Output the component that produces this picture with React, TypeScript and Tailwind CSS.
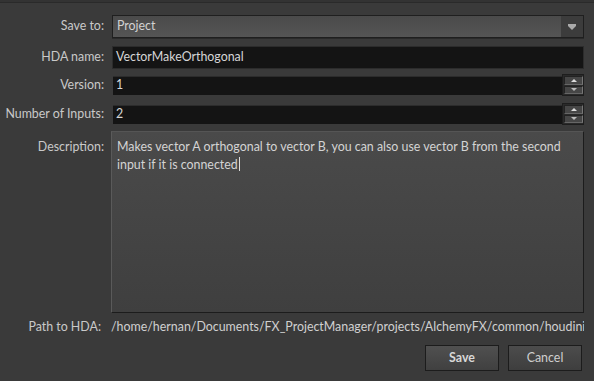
import React from 'react';

const font = { fontFamily: '"Source Sans Pro", Lato, "Noto Sans", sans-serif' };

function Spinner() {
  return (
    <div className="flex h-[22px] w-[22px] flex-col justify-center gap-[1px] border border-[#1e1e1e] bg-[#2a2a2a] p-[1px] pr-0">
      <div className="flex h-[9px] items-center justify-center border border-[#222] border-r-[#777] border-b-[#666] bg-[#464646]">
        <div className="h-0 w-0 border-x-[3px] border-b-[3px] border-x-transparent border-b-[#ddd]" />
      </div>
      <div className="flex h-[9px] items-center justify-center border border-[#222] border-r-[#777] border-b-[#666] bg-[#464646]">
        <div className="h-0 w-0 border-x-[3px] border-t-[3px] border-x-transparent border-t-[#bbb]" />
      </div>
    </div>
  );
}

function Row({ label, children, h }: { label: string; children: React.ReactNode; h: string }) {
  return (
    <div className={`flex items-center ${h}`}>
      <div className="w-[111px] shrink-0 whitespace-nowrap pr-[7px] text-right text-[#c9c9c9]">{label}</div>
      <div className="flex-1">{children}</div>
    </div>
  );
}

export default function App() {
  return (
    <div className="h-[381px] w-[594px] overflow-hidden bg-[#3a3a3a] text-[12.4px]" style={font}>
      <div className="h-[3px] border-b border-[#2a2a2a] bg-[#333]" />
      <div className="flex flex-col pr-[10px] pt-[12px]">
        <Row label="Save to:" h="h-[23px]">
          <div className="ml-[1px] flex h-[23px] items-stretch border border-[#1f1f1f] bg-gradient-to-b from-[#4a4a4a] to-[#555] shadow-[0_1px_0_#2a2a2a]">
            <div className="flex flex-1 items-center pl-[4px] text-[#d2d2d2]">Project</div>
            <div className="flex w-[22px] items-center justify-center bg-[#3c3c3c]">
              <div className="flex flex-col items-center">
                <div className="h-[2px] w-[8px] bg-[#aaa]" />
                <div className="h-0 w-0 border-x-[4px] border-t-[4px] border-x-transparent border-t-[#aaa]" />
              </div>
            </div>
          </div>
        </Row>
        <div className="mt-[7px]">
          <Row label="HDA name:" h="h-[24px]">
            <div className="ml-[1px] flex h-[23px] items-center border border-[#2c2c2c] bg-[#141414] pl-[3px] text-[#d6d6d6]">
              VectorMakeOrthogonal
            </div>
          </Row>
        </div>
        <div className="mt-[5px]">
          <Row label="Version:" h="h-[22px]">
            <div className="flex items-center">
              <div className="ml-[2px] flex h-[19px] flex-1 items-center border-t border-[#2c2c2c] bg-[#141414] pl-[3px] text-[#d6d6d6]">1</div>
              <Spinner />
            </div>
          </Row>
        </div>
        <div className="mt-[7px]">
          <Row label="Number of Inputs:" h="h-[22px]">
            <div className="flex items-center">
              <div className="ml-[2px] flex h-[19px] flex-1 items-center border-t border-[#2c2c2c] bg-[#141414] pl-[3px] text-[#d6d6d6]">2</div>
              <Spinner />
            </div>
          </Row>
        </div>
        <div className="mt-[6px] flex">
          <div className="w-[111px] shrink-0 pr-[7px] pt-[7px] text-right text-[#c9c9c9]">Description:</div>
          <div className="h-[182px] flex-1 border border-l-[#5a5a5a] border-t-[#555] border-r-[#1c1c1c] border-b-[#1c1c1c] bg-gradient-to-b from-[#4a4a4a] to-[#3f3f3f] px-[5px] pt-[7px] leading-[16px] text-[#d4d4d4]">
            Makes vector A orthogonal to vector B, you can also use vector B from the second input if it is connected
            <span className="ml-[1px] inline-block h-[14px] w-[1px] translate-y-[2px] bg-[#ddd]" />
          </div>
        </div>
        <div className="mt-[6px] flex h-[16px] items-center">
          <div className="w-[111px] shrink-0 whitespace-nowrap pr-[10px] text-right text-[#c9c9c9]">Path to HDA:</div>
          <div className="flex-1 overflow-hidden whitespace-nowrap text-[#d0d0d0]">
            /home/hernan/Documents/FX_ProjectManager/projects/AlchemyFX/common/houdini/otls
          </div>
        </div>
        <div className="mt-[10px] flex justify-end gap-[9px] pr-[2px]">
          <button className="h-[26px] w-[74px] border border-[#1c1c1c] bg-gradient-to-b from-[#505050] to-[#404040] font-bold text-[#d8d8d8]">
            Save
          </button>
          <button className="h-[26px] w-[74px] border border-[#1c1c1c] bg-gradient-to-b from-[#4c4c4c] to-[#3e3e3e] text-[#cfcfcf]">
            Cancel
          </button>
        </div>
      </div>
    </div>
  );
}
